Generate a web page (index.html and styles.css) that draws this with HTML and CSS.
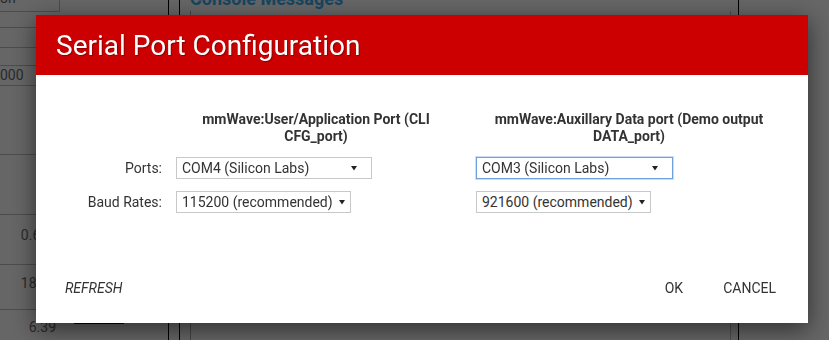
FILE: index.html
```html
<!DOCTYPE html>
<html>
<head>
<link rel="stylesheet" href="styles.css">
<title>mmWave Demo Visualizer</title>
</head>
<body>
  <div class="page">
    <aside class="side">
      <div class="side-top">
        <div class="mini-select"><span>on</span><svg width="6" height="5" viewBox="0 0 6 5"><path d="M0 0h6L3 4.5z" fill="#222"/></svg></div>
      </div>
      <div class="side-row h19"></div>
      <div class="side-field"><div class="mini-input">000</div></div>
      <div class="side-row h68"></div>
      <div class="side-row h59"></div>
      <div class="side-cell h50 p13">0.625</div>
      <div class="side-cell h45 p12">18.75</div>
      <div class="side-cell p8">6.39<span class="bar"></span></div>
    </aside>
    <div class="gutter"></div>
    <section class="console">
      <h2>Console Messages</h2>
      <div class="log"></div>
    </section>
  </div>

  <div class="overlay">
    <div class="dialog">
      <div class="dialog-head">
        <h1>Serial Port Configuration</h1>
      </div>
      <div class="dialog-body">
        <div class="port-grid">
          <div></div>
          <div class="col-head col-cli">mmWave:User/Application Port (CLI CFG_port)</div>
          <div class="col-head col-data">mmWave:Auxillary Data port (Demo output DATA_port)</div>

          <div class="lbl">Ports:</div>
          <div><div class="select ports">COM4 (Silicon Labs)<svg width="6" height="5" viewBox="0 0 6 5"><path d="M0 0h6L3 4.5z" fill="#222"/></svg></div></div>
          <div><div class="select ports focus">COM3 (Silicon Labs)<svg width="6" height="5" viewBox="0 0 6 5"><path d="M0 0h6L3 4.5z" fill="#222"/></svg></div></div>

          <div class="lbl">Baud Rates:</div>
          <div><div class="select">115200 (recommended)<svg width="6" height="5" viewBox="0 0 6 5"><path d="M0 0h6L3 4.5z" fill="#222"/></svg></div></div>
          <div><div class="select">921600 (recommended)<svg width="6" height="5" viewBox="0 0 6 5"><path d="M0 0h6L3 4.5z" fill="#222"/></svg></div></div>
        </div>
      </div>
      <div class="dialog-foot">
        <button type="button" class="btn refresh">REFRESH</button>
        <span class="spacer"></span>
        <button type="button" class="btn">OK</button>
        <button type="button" class="btn">CANCEL</button>
      </div>
    </div>
  </div>
</body>
</html>
```

FILE: styles.css
```css
html, body {
  margin: 0;
  height: 100%;
  overflow: hidden;
}

body {
  background: #cccccc;
  font-family: Roboto, "Liberation Sans", sans-serif;
  font-size: 14px;
  color: #333;
}

/* page behind the modal */
.page {
  display: flex;
  margin-top: -14px;
  height: 354px;
}

.side {
  width: 168px;
  border-right: 1px solid #000;
  color: #555;
}

.side-top {
  height: 41px;
  border-bottom: 1px solid #999;
}

.mini-select {
  display: flex;
  align-items: flex-end;
  width: 59px;
  height: 20px;
  padding-bottom: 5px;
  border-right: 1px solid #999;
  border-bottom: 1px solid #999;
  line-height: 16px;
}

.mini-select svg {
  margin: 0 0 11px 34px;
}

.side-row, .side-cell {
  border-bottom: 1px solid #999;
}

.h19 { height: 19px; }
.h68 { height: 68px; }
.h59 { height: 59px; }
.h50 { height: 50px; }
.h45 { height: 45px; }

.side-field {
  height: 20px;
  padding-top: 17px;
  border-bottom: 1px solid #999;
}

.mini-input {
  height: 19px;
  border-top: 1px solid #999;
  line-height: 19px;
}

.side-cell {
  position: relative;
  box-sizing: border-box;
  padding-right: 112px;
  text-align: right;
  line-height: 16px;
}

.side-cell.p13 { padding-top: 12px; }
.side-cell.p12 { padding-top: 10px; }
.side-cell.p8 { padding-top: 9px; border-bottom: none; }

.bar {
  position: absolute;
  left: 74px;
  top: 13px;
  width: 50px;
  border-top: 1px solid #000;
}

.gutter {
  width: 10px;
  border-right: 1px solid #000;
}

.console {
  width: 558px;
  border-right: 1px solid #000;
  display: flex;
  flex-direction: column;
}

.console h2 {
  margin: 0 0 0 10px;
  font-size: 18px;
  line-height: 25px;
  color: #2e8bc0;
}

.log {
  flex: 1;
  margin: 0 7px 0 10px;
  border-left: 1px solid #888;
  border-right: 1px solid #999;
}

/* modal */
.overlay {
  position: fixed;
  inset: 0;
  background: rgba(0, 0, 0, 0.5);
}

.dialog {
  width: 772px;
  margin: 15px 0 0 36px;
  background: #fff;
  box-shadow: 0 6px 22px rgba(0, 0, 0, 0.55);
}

.dialog-head {
  height: 60px;
  display: flex;
  align-items: center;
  padding-left: 20px;
  background: #cc0000;
}

.dialog-head h1 {
  margin: 0;
  font-size: 28px;
  font-weight: 400;
  color: #fff;
  text-shadow: 1px 1px 1px rgba(0, 0, 0, 0.3);
}

.dialog-body {
  padding: 36px 0 49px;
}

.port-grid {
  display: grid;
  grid-template-columns: 140px 300px 1fr;
  row-gap: 12px;
  align-items: center;
}

.col-head {
  font-weight: 700;
  line-height: 17px;
  text-align: center;
  color: #333;
}

.col-cli { padding-right: 20px; }
.col-data { padding-right: 26px; }

.lbl {
  text-align: right;
  padding-right: 14px;
}

.select {
  display: inline-flex;
  align-items: center;
  height: 22px;
  box-sizing: border-box;
  padding: 0 5px 0 5px;
  border: 1px solid #c8c8c8;
  background: #fff;
  color: #333;
}

.select svg {
  margin-left: 6px;
}

.select.ports {
  width: 196px;
}

.select.ports svg {
  margin-left: auto;
  margin-right: 9px;
}

.select.focus {
  width: 197px;
  border-color: #6fa1dc;
  box-shadow: 0 0 0 1px rgba(111, 161, 220, 0.35);
}

.dialog-foot {
  display: flex;
  align-items: center;
  padding: 8px 16px 17px 13px;
}

.spacer {
  flex: 1;
}

.btn {
  height: 36px;
  padding: 0 16px;
  margin-left: 8px;
  border: none;
  background: none;
  font-family: Roboto, "Liberation Sans", sans-serif;
  font-size: 14px;
  color: #333;
}

.btn.refresh {
  margin-left: 0;
  font-style: italic;
}
```
